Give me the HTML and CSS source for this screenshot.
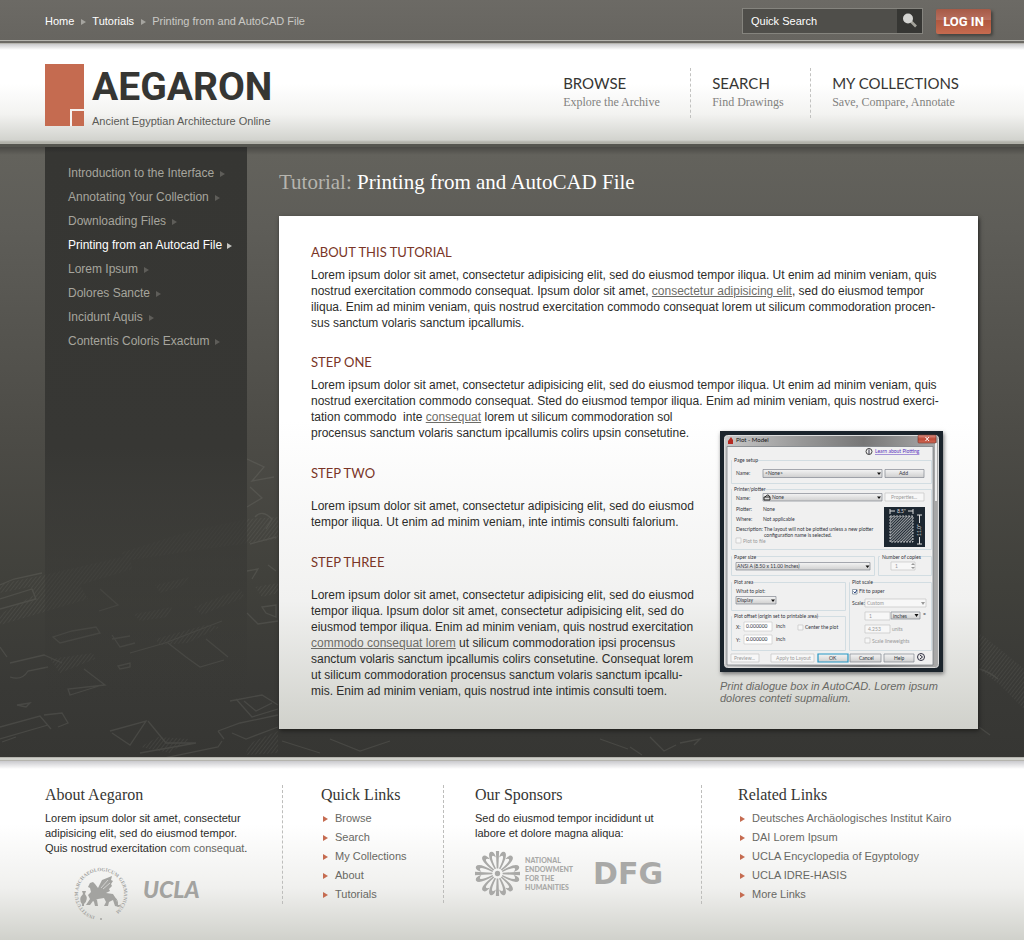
FILE: index.html
```html
<!DOCTYPE html>
<html lang="en">
<head>
<meta charset="utf-8">
<title>AEGARON - Printing from and AutoCAD File</title>
<link rel="stylesheet" href="styles.css">
</head>
<body>
<div class="topbar">
  <nav class="crumbs" aria-label="Breadcrumb">
    <a href="#home">Home</a><span class="arrow"></span><a href="#tutorials">Tutorials</a><span class="arrow"></span><span>Printing from and AutoCAD File</span>
  </nav>
  <form class="search">
    <input class="search-box" type="text" placeholder="Quick Search" aria-label="Quick Search">
    <button class="search-go" type="submit" aria-label="Search">
      <svg width="16" height="16" viewBox="0 0 16 16"><path d="M9 8.500L14 13.500" stroke="#a3a29a" stroke-width="2.600"/><circle cx="6" cy="5.500" r="5" fill="#d4d4d1"/></svg>
    </button>
  </form>
  <button class="login" type="button">LOG IN</button>
</div>

<header class="header">
  <a class="brand" href="#home">
    <svg class="mark" width="39" height="62" viewBox="0 0 39 62"><path d="M0 0H39V62H0Z" fill="#c56b50"/><path d="M26 62V46H39" fill="none" stroke="#f6f2f0" stroke-width="2"/></svg>
    <span class="brand-text"><span class="brand-name">AEGARON</span><span class="tagline">Ancient Egyptian Architecture Online</span></span>
  </a>
  <nav class="mainnav" aria-label="Main">
    <a href="#browse"><span class="nav-title">BROWSE</span><span class="nav-sub">Explore the Archive</span></a>
    <a href="#search"><span class="nav-title">SEARCH</span><span class="nav-sub">Find Drawings</span></a>
    <a href="#collections"><span class="nav-title">MY COLLECTIONS</span><span class="nav-sub">Save, Compare, Annotate</span></a>
  </nav>
</header>

<div class="main">
  <svg class="sketch" viewBox="0 0 1024 310" preserveAspectRatio="xMidYMax slice" aria-hidden="true">
    <defs>
      <pattern id="hatch" width="3" height="3" patternUnits="userSpaceOnUse" patternTransform="rotate(38)"><path d="M0 0V3" stroke="#8b8b84" stroke-width="1.400"/></pattern>
    </defs>
    <g fill="url(#hatch)">
      <path d="M0 137L44 128L130 108L132 122L80 138L88 152L0 178V167L34 148L30 140L0 146Z"/>
      <path d="M120 106L190 84L247 72L278 70V92L250 96L190 104L132 113Z"/>
      <path d="M50 212L93 206L95 212L60 226ZM155 192L205 178L220 180L188 196L160 198ZM194 160L240 142L245 150L202 168ZM255 140L278 136V146L262 150ZM134 167L172 160L168 170L140 174ZM155 138L190 130L180 140L160 146Z"/>
      <path d="M140 300L158 290L190 292L170 306ZM250 296L278 284V306L245 308ZM979 186L1000 202L1024 222V262L1000 238L979 222Z"/>
    </g>
    <g fill="none" stroke="#8b8b84" stroke-width="1.300">
      <path d="M247 12L264 20L252 34L274 30M250 40L262 51L247 60M255 70Q262 62 272 72L266 82M250 97L276 90M268 118L276 124M247 124L258 122L252 132M247 166L258 177L278 174M262 160L276 158V170L266 166Z"/>
      <path d="M0 152L32 142L36 152L0 162M0 138L14 132L42 126M100 142L118 158L99 164M53 190L60 196L100 186L96 180L72 184ZM112 188L120 200L135 196M130 206L165 196L222 174M168 196L186 210L200 220L224 213M206 192L228 210"/>
      <path d="M112 192L130 189M0 200L7 210M10 216L44 208L62 216M10 230Q22 234 28 224L48 220M84 222L105 238L68 242L70 248L102 238M118 219L130 216V220L120 222ZM17 258L30 256L26 260Z"/>
      <path d="M0 280L40 269L51 282M44 268L62 266L68 276L58 280M2 295L16 290M0 292L48 278M110 284L146 274L130 298L112 286M148 274L166 296L196 296L140 306M222 294L218 300L130 318"/>
      <path d="M230 254L262 248L278 258M236 252L252 270L278 262M218 284L240 276L278 268M232 286L246 292L278 280M218 284L224 292M244 254L256 264L272 256"/>
      <path d="M600 292L628 302M650 290L664 304L676 298M680 296L700 292L694 298M630 300L642 308M282 294L320 306M330 292L360 304L390 294M979 222Q988 224 998 232M979 280L990 288"/>
    </g>
  </svg>
  <nav class="sidebar" aria-label="Tutorials">
    <ul>
      <li><a href="#t1">Introduction to the Interface<span class="arrow"></span></a></li>
      <li><a href="#t2">Annotating Your Collection<span class="arrow"></span></a></li>
      <li><a href="#t3">Downloading Files<span class="arrow"></span></a></li>
      <li><a class="current" href="#t4" aria-current="page">Printing from an Autocad File<span class="arrow"></span></a></li>
      <li><a href="#t5">Lorem Ipsum<span class="arrow"></span></a></li>
      <li><a href="#t6">Dolores Sancte<span class="arrow"></span></a></li>
      <li><a href="#t7">Incidunt Aquis<span class="arrow"></span></a></li>
      <li><a href="#t8">Contentis Coloris Exactum<span class="arrow"></span></a></li>
    </ul>
  </nav>
  <main class="content">
    <h1><span>Tutorial:</span> Printing from and AutoCAD File</h1>
    <article class="panel">
      <section>
        <h2>ABOUT THIS TUTORIAL</h2>
        <p>Lorem ipsum dolor sit amet, consectetur adipisicing elit, sed do eiusmod tempor iliqua. Ut enim ad minim veniam, quis<br>nostrud exercitation commodo consequat. Ipsum dolor sit amet, <a href="#a">consectetur adipisicing elit</a>, sed do eiusmod tempor<br>iliqua. Enim ad minim veniam, quis nostrud exercitation commodo consequat lorem ut silicum commodoration procen-<br>sus sanctum volaris sanctum ipcallumis.</p>
      </section>
      <section>
        <h2>STEP ONE</h2>
        <p>Lorem ipsum dolor sit amet, consectetur adipisicing elit, sed do eiusmod tempor iliqua. Ut enim ad minim veniam, quis<br>nostrud exercitation commodo consequat. Sted do eiusmod tempor iliqua. Enim ad minim veniam, quis nostrud exerci-<br>tation commodo&nbsp; inte <a href="#b">consequat</a> lorem ut silicum commodoration sol<br>procensus sanctum volaris sanctum ipcallumis colirs upsin consetutine.</p>
      </section>
      <div class="split">
        <div class="steps">
          <section>
            <h2>STEP TWO</h2>
            <p>Lorem ipsum dolor sit amet, consectetur adipisicing elit, sed do eiusmod<br>tempor iliqua. Ut enim ad minim veniam, inte intimis consulti falorium.</p>
          </section>
          <section>
            <h2>STEP THREE</h2>
            <p>Lorem ipsum dolor sit amet, consectetur adipisicing elit, sed do eiusmod<br>tempor iliqua. Ipsum dolor sit amet, consectetur adipisicing elit, sed do<br>eiusmod tempor iliqua. Enim ad minim veniam, quis nostrud exercitation<br><a href="#c">commodo consequat lorem</a> ut silicum commodoration ipsi procensus<br>sanctum volaris sanctum ipcallumis colirs consetutine. Consequat lorem<br>ut silicum commodoration procensus sanctum volaris sanctum ipcallu-<br>mis. Enim ad minim veniam, quis nostrud inte intimis consulti toem.</p>
          </section>
        </div>
        <figure>
          <svg class="dialog" viewBox="0 0 223 241" role="img" aria-label="Plot dialogue box">
            <defs>
              <linearGradient id="frame" x1="0" y1="0" x2="1" y2="0"><stop offset="0" stop-color="#c8c8c8"/><stop offset=".35" stop-color="#999"/><stop offset=".65" stop-color="#777"/><stop offset="1" stop-color="#aaa"/></linearGradient>
              <linearGradient id="btn" x1="0" y1="0" x2="0" y2="1"><stop offset="0" stop-color="#f4f4f4"/><stop offset="1" stop-color="#cfcfcf"/></linearGradient>
              <linearGradient id="close" x1="0" y1="0" x2="0" y2="1"><stop offset="0" stop-color="#dc9386"/><stop offset=".5" stop-color="#bf4a37"/><stop offset="1" stop-color="#cf6855"/></linearGradient>
              <pattern id="dots" width="2" height="2" patternUnits="userSpaceOnUse" patternTransform="rotate(45)"><path d="M0 0V2" stroke="#ddd" stroke-width="1.300"/></pattern>
            </defs>
            <path d="M0 0H223V241H0Z" fill="#1b242c"/>
            <rect x="4.500" y="4.500" width="214" height="232" rx="3" fill="url(#frame)" stroke="#ddd"/>
            <path d="M216 12V70" stroke="#eee" stroke-width="2"/>
            <path d="M7 15.500H213V234H7Z" fill="#f0f0f0" stroke="#70767b" stroke-width=".7"/>
            <path d="M8 10L11 6L13 9V13H8Z" fill="#b52a22"/>
            <rect x="198" y="4" width="18" height="8" rx="1" fill="url(#close)" stroke="#762f26" stroke-width=".6"/>
            <path d="M205.500 6L209 10M209 6L205.500 10" stroke="#fff"/>
            <g fill="none" stroke="#d2dde2" stroke-width="1">
              <path d="M11.500 29.500H211.500V52.500H11.500ZM11.500 58.500H211.500V118.500H11.500ZM11.500 125.500H154.500V144.500H11.500ZM158.500 125.500H211.500V144.500H158.500ZM11.500 151.500H125.500V179.500H11.500ZM129.500 151.500H211.500V219.500H129.500ZM11.500 185.500H125.500V219.500H11.500Z"/>
            </g>
            <path d="M12 26H37V33H12ZM12 55H42V62H12ZM12 122H35V129H12ZM160 122H197V129H160ZM12 148H33V155H12ZM130 148H151V155H130ZM12 182H92V189H12Z" fill="#f0f0f0"/>
            <g fill="url(#btn)" stroke="#828790" stroke-width=".7">
              <path d="M43 38.500H162V46.500H43Z"/><path d="M165 38.500H204V46.500H165Z"/><path d="M43 62.500H162V70H43Z"/><path d="M16 131.500H150V139H16Z"/><path d="M16 165.500H56V173H16Z"/><path d="M171 181H200V188H171Z"/><path d="M130 223H161V231H130Z"/><path d="M164 223H194V231H164Z"/>
              <path d="M98 223H128V231H98Z" stroke="#2496c4" stroke-width="1.200"/>
            </g>
            <g fill="#f7f7f7" stroke="#c4c4c4" stroke-width=".7">
              <path d="M165 62H204V70H165ZM171 131H195V139H171ZM145 168H206V176H145ZM145 181H170V189H145ZM145 194H170V202H145ZM145 207H150V212H145ZM16 107H21V112H16ZM78 194H83V199H78ZM11 223H39V231H11ZM51 223H94V231H51Z"/>
            </g>
            <path d="M24 191H52V200H24ZM24 204H52V213H24Z" fill="#fff" stroke="#ccc" stroke-width=".7"/>
            <path d="M132.500 158.500H137V163H132.500Z" fill="#fff" stroke="#68788a" stroke-width=".7"/><path d="M133.500 160.500L135 162L137 159" fill="none" stroke="#28427b"/>
            <path d="M157 41.500H161L159 44ZM157 65.500H161L159 68ZM145.500 134.500H149.500L147.500 137ZM51 168.500H55L53 171ZM194.500 183H198.500L196.500 186Z" fill="#111"/>
            <path d="M201 171H205L203 174ZM191 134L193 132L195 134ZM191 136H195L193 138Z" fill="#999"/>
            <path d="M164 76H205V116H164Z" fill="#1d2731"/><path d="M170 85H193V111H170Z" fill="url(#dots)" stroke="#ddd" stroke-width=".8" stroke-dasharray="2 1"/><path d="M170 78V83M193 78V83M170 80H175M188 80H193M197 84H202M197 113H202M199.500 84V92M199.500 106V113" stroke="#ddd" fill="none"/>
            <circle cx="149" cy="20.500" r="3" fill="none" stroke="#444"/><path d="M149 19V23M149 17.700V18.500" stroke="#334"/>
            <circle cx="201" cy="226" r="3.500" fill="#eee" stroke="#334"/><path d="M200 224L202.500 226L200 228" fill="none" stroke="#223"/>
            <path d="M45 66Q48 62 50 66M44 66H50V69H44Z" fill="none" stroke="#222"/>
            <g class="dlg-text">
              <text x="16" y="11" class="dlg-title">Plot - Model</text>
              <text x="155" y="22" class="dlg-link">Learn about Plotting</text>
              <text x="14" y="31">Page setup</text><text x="16" y="44">Name:</text><text x="45" y="44">&lt;None&gt;</text><text x="179" y="44">Add</text>
              <text x="14" y="60">Printer/plotter</text><text x="16" y="69">Name:</text><text x="52" y="68">None</text>
              <text x="16" y="80">Plotter:</text><text x="43" y="80">None</text><text x="16" y="90">Where:</text><text x="43" y="90">Not applicable</text>
              <text x="16" y="100">Description:</text><text x="44" y="100">The layout will not be plotted unless a new plotter</text><text x="44" y="106">configuration name is selected.</text>
              <text x="14" y="128">Paper size</text><text x="17" y="137">ANSI A (8.50 x 11.00 Inches)</text><text x="162" y="128">Number of copies</text>
              <text x="14" y="153">Plot area</text><text x="16" y="162">What to plot:</text><text x="17" y="171">Display</text>
              <text x="132" y="153">Plot scale</text><text x="139" y="162">Fit to paper</text><text x="132" y="174">Scale:</text><text x="173" y="187">inches</text><text x="203" y="185">=</text>
              <text x="14" y="187">Plot offset (origin set to printable area)</text><text x="16" y="198">X:</text><text x="26" y="197">0.000000</text><text x="56" y="197">inch</text><text x="85" y="198">Center the plot</text><text x="16" y="211">Y:</text><text x="26" y="210">0.000000</text><text x="56" y="210">inch</text>
              <text x="109" y="229">OK</text><text x="139" y="229">Cancel</text><text x="174" y="229">Help</text>
              <g class="dlg-dim"><text x="171" y="68">Properties...</text><text x="23" y="112">Plot to file</text><text x="175" y="137">1</text><text x="147" y="174">Custom</text><text x="149" y="187">1</text><text x="148" y="200">4.253</text><text x="172" y="200">units</text><text x="152" y="212">Scale lineweights</text><text x="14" y="229">Preview...</text><text x="56" y="229">Apply to Layout</text></g>
              <g class="dlg-light"><text x="177" y="82">8.5"</text><text x="-105" y="201" transform="rotate(-90)">11.0"</text></g>
            </g>
          </svg>
          <figcaption>Print dialogue box in AutoCAD. Lorem ipsum<br>dolores conteti supmalium.</figcaption>
        </figure>
      </div>
    </article>
  </main>
</div>

<footer class="footer">
  <section>
    <h3>About Aegaron</h3>
    <p>Lorem ipsum dolor sit amet, consectetur<br>adipisicing elit, sed do eiusmod tempor.<br>Quis nostrud exercitation <a href="#d">com consequat</a>.</p>
    <div class="logos about-logos">
      <svg class="seal-logo" width="56" height="56" viewBox="0 0 56 56" role="img" aria-label="Institutum Archaeologicum Germanicum">
        <defs><path id="ring" d="M28 51A23 23 0 0 1 28 5A23 23 0 0 1 28 51"/></defs>
        <text class="seal"><textPath href="#ring" startOffset="6">INSTITUTUM ARCHAEOLOGICUM GERMANICUM</textPath></text>
        <circle cx="28" cy="53" r="1" fill="#a3a3a0"/>
        <g fill="#a3a3a0"><path d="M15 21L17 17L20 16L22 18L25 22L27 18L29 14L39 10L38 14L40 15L38 18L39 20L36 23L37 25L33 27L40 28L43 33L45 39L47 40L46 41L42 40L40 34L36 36L35 40H31L33 36L31 32L25 33L20 35L17 39H13L17 33L15 29L18 26L17 22Z"/><path d="M9 25H13L12 28Q16 33 11 38V40H9V38Q5 33 10 28Z"/><path d="M16 30L24 34L25 40H22L21 36Z"/></g>
        <path d="M40 30Q46 34 44 40L48 39M25 25L36 12M27 26L38 16M29 27L38 20" fill="none" stroke="#a3a3a0"/>
        <path d="M28 22L35 14M30 23L37 17" stroke="#f0f0ef" stroke-width=".6"/>
      </svg>
      <span class="ucla">UCLA</span>
    </div>
  </section>
  <section>
    <h3>Quick Links</h3>
    <ul><li><a href="#browse">Browse</a></li><li><a href="#search">Search</a></li><li><a href="#collections">My Collections</a></li><li><a href="#about">About</a></li><li><a href="#tutorials">Tutorials</a></li></ul>
  </section>
  <section>
    <h3>Our Sponsors</h3>
    <p>Sed do eiusmod tempor incididunt ut<br>labore et dolore magna aliqua:</p>
    <div class="logos">
      <svg width="45" height="45" viewBox="-22 -22 44 44" role="img" aria-label="National Endowment for the Humanities">
        <defs><g id="petal"><path d="M-1.600 -22L-.8 -5H.8L1.600 -22Z"/></g><g id="curl"><path d="M-.6 -5Q-.3 -14 -1.600 -17Q-3 -19 -5 -15Q-6 -22 -2 -22Q2.500 -21 .8 -5Z"/></g><g id="curlr"><path d="M.6 -5Q.3 -14 1.600 -17Q3 -19 5 -15Q6 -22 2 -22Q-2.500 -21 -.8 -5Z"/></g></defs>
        <g fill="#a9a9a7"><circle r="2.600"/>
          <use href="#petal"/><use href="#petal" transform="rotate(90)"/><use href="#petal" transform="rotate(180)"/><use href="#petal" transform="rotate(270)"/>
          <use href="#curl" transform="rotate(24)"/><use href="#curl" transform="rotate(47)"/><use href="#curlr" transform="rotate(66)"/>
          <use href="#curl" transform="rotate(114)"/><use href="#curlr" transform="rotate(133)"/><use href="#curlr" transform="rotate(156)"/>
          <use href="#curl" transform="rotate(204)"/><use href="#curl" transform="rotate(227)"/><use href="#curlr" transform="rotate(246)"/>
          <use href="#curl" transform="rotate(294)"/><use href="#curlr" transform="rotate(313)"/><use href="#curlr" transform="rotate(336)"/>
        </g>
      </svg>
      <span class="neh">NATIONAL<br>ENDOWMENT<br>FOR THE<br>HUMANITIES</span>
      <span class="dfg">DFG</span>
    </div>
  </section>
  <section>
    <h3>Related Links</h3>
    <ul><li><a href="#r1">Deutsches Archäologisches Institut Kairo</a></li><li><a href="#r2">DAI Lorem Ipsum</a></li><li><a href="#r3">UCLA Encyclopedia of Egyptology</a></li><li><a href="#r4">UCLA IDRE-HASIS</a></li><li><a href="#r5">More Links</a></li></ul>
  </section>
</footer>
</body>
</html>
```
FILE: styles.css
```css
* { box-sizing: border-box; }
body {
  margin: 0;
  font-family: "Liberation Sans", Arial, sans-serif;
  font-size: 12px;
  line-height: 16px;
  color: #2c2c2a;
  background: #fff;
}
h1, h2, h3, p, ul, figure { margin: 0; padding: 0; font-weight: normal; }
ul { list-style: none; }
a { color: inherit; text-decoration: none; }
svg { display: block; }
button, input { font: inherit; border: 0; margin: 0; padding: 0; }

.arrow {
  display: inline-block;
  border: 3px solid transparent;
  border-left: 5px solid #a5a49f;
  border-right: 0;
}

/* Top bar */
.topbar {
  display: flex;
  align-items: center;
  min-height: 44px;
  padding: 2px 33px 0 45px;
  font-size: 11px;
  color: #c9c9c5;
  background: linear-gradient(#6c6a65, #676560);
  border-bottom: 4px double #b5b4ae;
}
.crumbs { flex: 1; }
.crumbs a { color: #fff; }
.crumbs .arrow { margin: 0 6px 0 7px; }
.search {
  display: flex;
  width: 181px;
  height: 26px;
  border: 1px solid #85847e;
  background: #4f4e4a;
}
.search-box { flex: 1; min-width: 0; padding: 0 8px; color: #fff; background: transparent; }
.search-box::placeholder { color: #fff; opacity: 1; }
.search-go { display: grid; place-items: center; width: 25px; background: #363633; }
.login {
  width: 55px;
  height: 25px;
  margin-left: 13px;
  border-radius: 2px;
  font: bold 13px/25px Roboto, sans-serif;
  color: #fff;
  white-space: nowrap;
  background: linear-gradient(#a65a47, #b87060 45%, #b0583f 46%, #c66b4f);
  box-shadow: 2px 2px 3px #44433f;
}

/* Header */
.header {
  display: flex;
  justify-content: space-between;
  min-height: 103px;
  padding: 18px 65px 0 45px;
  border-bottom: 3px solid #55554f;
  background: linear-gradient(#c9c9cb, #fff 6px, #fff 40%, #f3f3f1 70%, #d2d3ce 96px, #b2b2aa 98px);
}
.brand { display: flex; gap: 8px; }
.mark { margin-top: 2px; }
.brand-text { display: flex; flex-direction: column; white-space: nowrap; }
.brand-name { font: bold 39px/50px Roboto, sans-serif; color: #363633; }
.tagline { font-size: 11px; line-height: 18px; color: #5a5a56; }
.mainnav { display: grid; grid-template-columns: 127px 120px auto; align-items: start; padding-top: 6px; }
.mainnav a { display: block; min-height: 50px; padding: 5px 0 0 21px; border-left: 1px dashed #c2c2c0; }
.mainnav a:first-child { border: 0; padding-left: 0; }
.nav-title { display: block; font: 15px/20px Lato, sans-serif; color: #363633; }
.nav-sub { display: block; font: 12px/18px "Liberation Serif", serif; color: #82827f; white-space: nowrap; }

/* Main area */
.main {
  position: relative;
  display: flex;
  align-items: stretch;
  padding: 0 46px 0 45px;
  min-height: 610px;
  background: linear-gradient(#4a4945, #63625c 8px, #5e5d58 80px, #4d4c47 280px, #40403b 440px, #393936 540px, #363633);
}
.sketch { position: absolute; inset: auto 0 0 0; width: 100%; height: 310px; opacity: .2; }
.sidebar {
  position: relative;
  flex: 0 0 202px;
  padding: 14px 0 0 23px;
  color: #a6a59d;
  background: linear-gradient(#2c2c2a, #363633 6px, #373734 300px, rgba(56, 56, 52, 0) 560px);
}
.sidebar a { display: block; line-height: 24px; }
.sidebar .arrow { margin-left: 6px; border-left-color: #5e5d59; }
.sidebar .current { color: #fff; }
.sidebar .current .arrow { margin-left: 5px; border-left-color: #c4c4c0; }
.content { position: relative; flex: 1; min-width: 0; padding: 19px 0 28px 32px; }
h1 { font: 21px/32px "Liberation Serif", serif; color: #fff; margin-bottom: 18px; }
h1 span { color: #b5b4ae; }
.panel {
  padding: 28px 35px 25px 32px;
  background: linear-gradient(#fff 40%, #f1f1f0 75%, #d0d1cb);
  box-shadow: 1px 2px 4px #20201e;
}
h2 { font: 13px/16px Lato, sans-serif; color: #7a3527; margin-bottom: 7px; }
.panel section { margin-bottom: 23px; }
.panel p a { color: #6d6c67; text-decoration: underline; }
.split { display: flex; justify-content: space-between; gap: 24px; margin-top: 24px; }
.steps { white-space: nowrap; }
.steps h2 { margin-bottom: 17px; }
.steps section { margin-bottom: 24px; }
.steps section:last-child { margin-bottom: 0; }
figure { width: 223px; margin-top: -34px; }
.dialog { width: 100%; box-shadow: 1px 2px 4px #777; }
.dlg-text { font: 5px Lato, sans-serif; fill: #30343c; }
.dlg-title { font-size: 6px; fill: #151515; }
.dlg-link { fill: #5932bd; text-decoration: underline; }
.dlg-dim { fill: #999; }
.dlg-light { fill: #ddd; }
figcaption { margin-top: 8px; font-size: 11px; line-height: 12px; font-style: italic; color: #696965; white-space: nowrap; }

/* Footer */
.footer {
  display: grid;
  grid-template-columns: 237fr 161fr 258fr 323fr;
  align-items: start;
  min-height: 183px;
  padding: 24px 0 20px 45px;
  font-size: 11px;
  line-height: 15px;
  border-top: 4px double #b5b4ae;
  background: linear-gradient(#c9c9cd, #fff 8px, #fff 35%, #f0f0ee 70%, #cfd0ca);
}
.footer section { min-height: 118px; border-left: 1px dashed #bdbdbb; white-space: nowrap; }
.footer section:first-child { border: 0; }
.footer section:nth-child(2) { padding-left: 38px; }
.footer section:nth-child(3) { padding-left: 31px; }
.footer section:nth-child(4) { padding-left: 36px; }
h3 { font: 16px/20px "Liberation Serif", serif; color: #363633; margin-bottom: 6px; }
.footer a { color: #686863; }
.footer ul { margin-top: -2px; }
.footer li { display: flex; align-items: center; gap: 7px; padding-left: 2px; line-height: 19px; }
.footer li::before { content: ""; border: 3px solid transparent; border-left: 5px solid #c56b50; border-right: 0; }
.logos { display: flex; align-items: center; margin-top: 10px; }
.about-logos { padding-left: 28px; }
.seal-logo { overflow: visible; }
.seal { font: 5px "Liberation Serif", serif; font-weight: bold; fill: #a3a3a0; }
.ucla { margin: 0 0 10px 14px; font: italic 900 23px/24px Lato, sans-serif; color: #a3a3a0; }
.neh { margin-left: 5px; font: 900 7px/9px Lato, sans-serif; color: #a9a9a7; }
.dfg { margin-left: 20px; font: bold 30px/30px "DejaVu Sans", sans-serif; color: #a9a9a7; }
```
